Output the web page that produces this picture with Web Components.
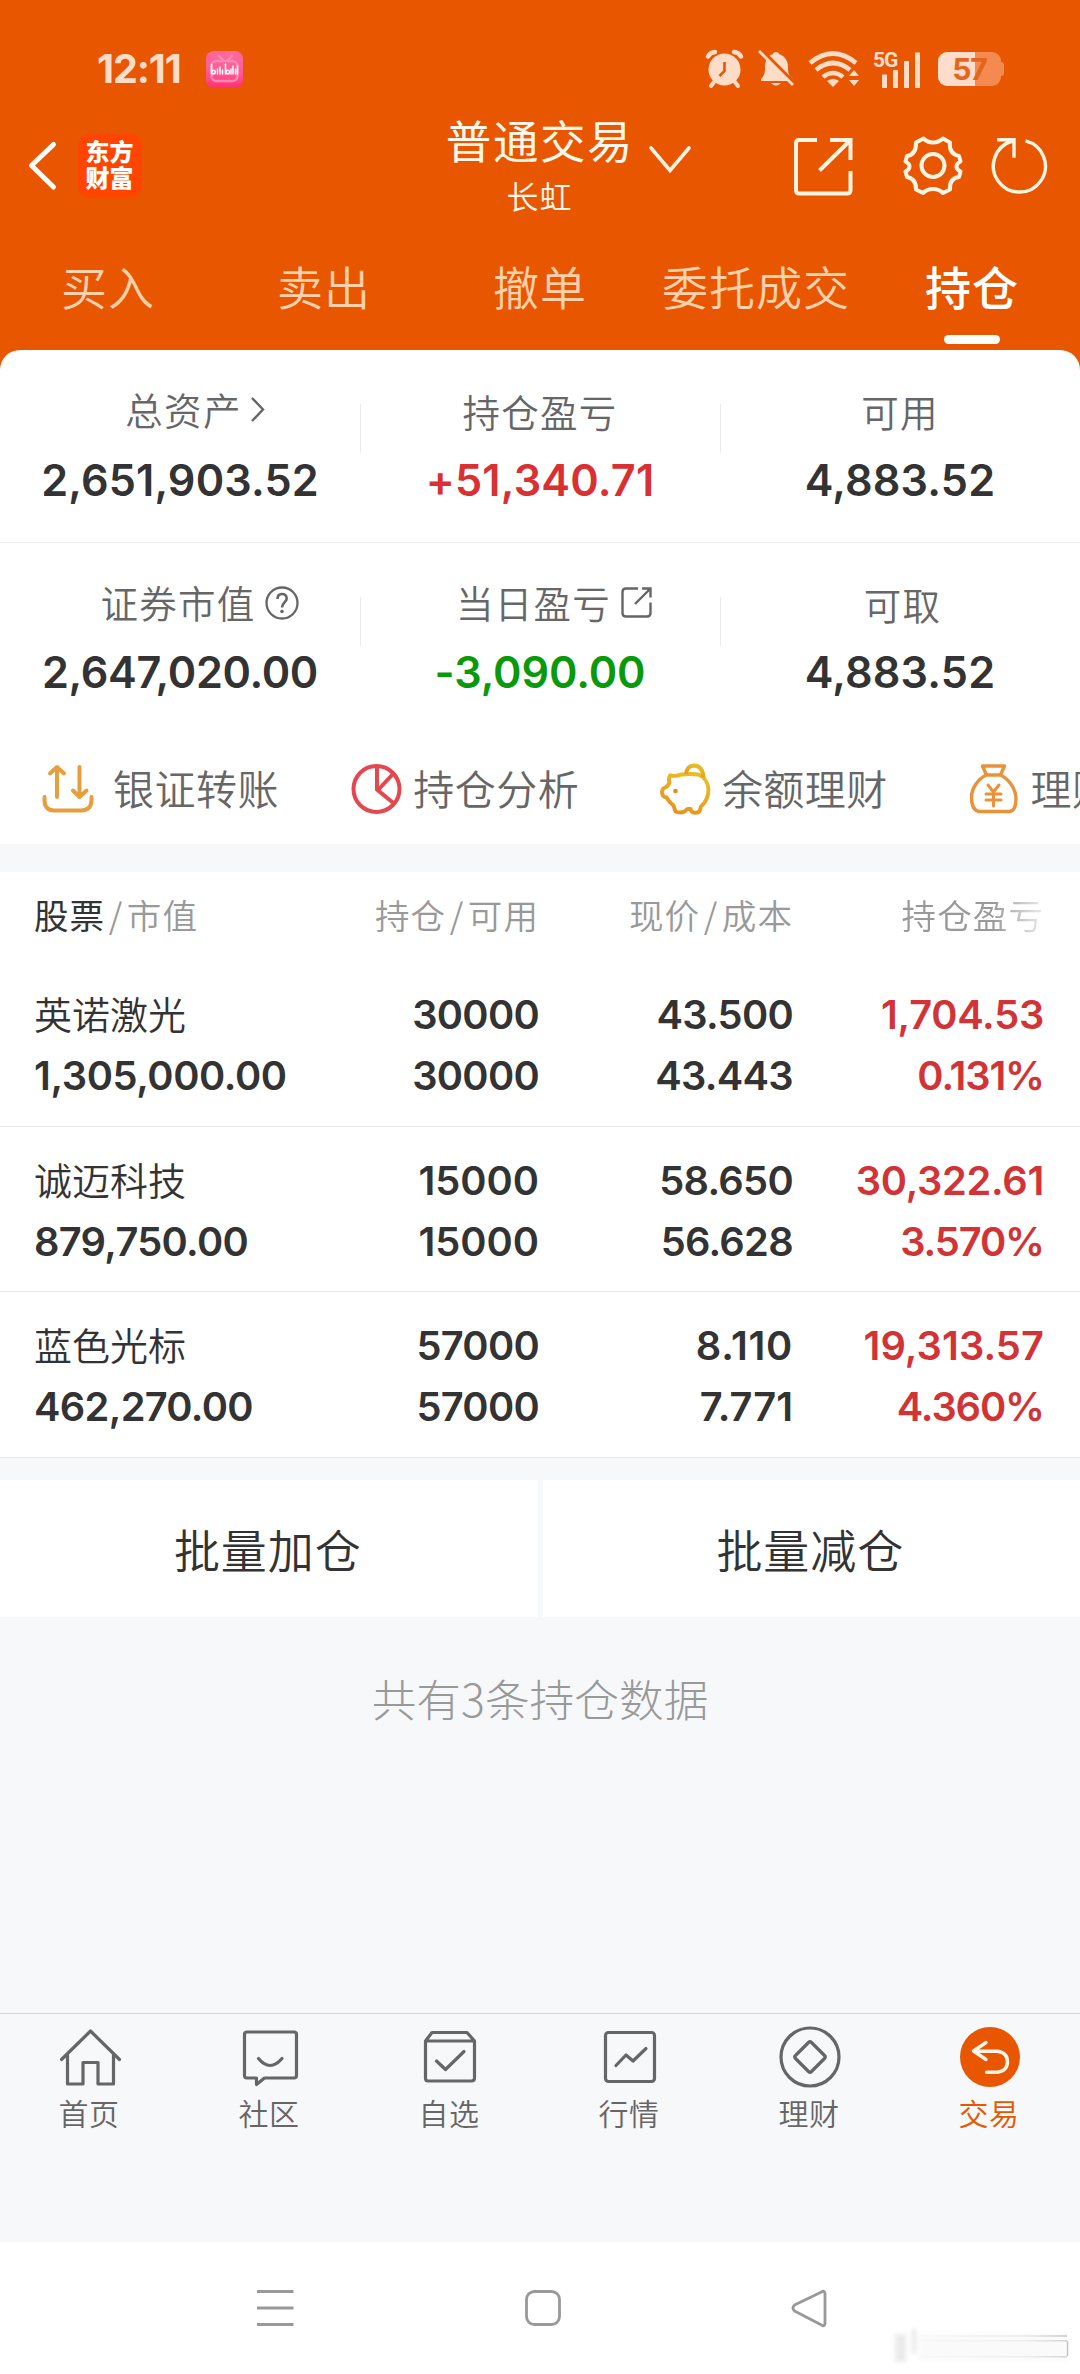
<!DOCTYPE html>
<html lang="zh-CN">
<head>
<meta charset="utf-8">
<title>普通交易 - 持仓</title>
<style>
html,body{margin:0;padding:0}
body{width:1080px;background:#f7f8fa;font-family:"Noto Sans CJK SC",sans-serif;font-weight:350;color:#333;
--num:Inter,"Noto Sans CJK SC",sans-serif;--brand:#e95600;--gray:#666;--line:#ebedef}
</style>
</head>
<body>
<trade-app></trade-app>
<script>
const define=(name,css,html)=>customElements.define(name,class extends HTMLElement{
  connectedCallback(){
    if(this.shadowRoot)return;
    const root=this.attachShadow({mode:'open'});
    const body=typeof html==='function'?html(this):html;
    root.innerHTML=`<style>*{box-sizing:border-box}svg{display:block;flex:none;overflow:visible}${css}</style>${body}`;
  }
});
const svg=(x,y,w,h,inner,attrs='')=>`<svg width="${w}" height="${h}" viewBox="${x} ${y} ${w} ${h}" fill="none" ${attrs}>${inner}</svg>`;

define('status-bar',`
:host{display:flex;align-items:center;height:110px;padding:28px 0 0 97px;color:#ffdcc8;font-family:var(--num)}
.time{width:109px;font-size:39.5px;font-weight:700;line-height:44px;letter-spacing:-1.1px}
.bili{width:37px;height:37px;border-radius:8px;background:linear-gradient(#ff6a9d,#ff5a94 60%,#ff2f74);margin-right:463px}
.net{display:flex;margin-left:13px;width:50px;height:37px}
.batt{display:flex;align-items:center;margin-left:15px}
.cell{display:flex;align-items:center;justify-content:center;width:63px;height:34px;border-radius:9px;background:linear-gradient(90deg,#ffdccb 0 37px,#f58a50 37px);color:#e4661d;font:700 30px/34px Inter,sans-serif;letter-spacing:-1px}
.nub{width:3px;height:14px;border-radius:0 3px 3px 0;background:#f58a50}
.g{font:700 21px/18px Roboto,sans-serif;letter-spacing:-1px;width:23px;white-space:nowrap}
`,`
<div class="time">12:11</div>
<div class="bili">${svg(206,52,37,37,`<g stroke="#ff8bb5" stroke-width="2.400" stroke-linecap="round"><rect x="211.500" y="62" width="26" height="20" rx="5"/><path d="M219 57l4 4m9-4-4 4"/></g><g stroke="#fff" stroke-width="1.500" stroke-linecap="round"><path d="M211.500 65.500v9M217.500 70v5M220 68v7M222.500 71v4M225.500 65v10M231 70v5M233 67v8M235.500 70v5M237.500 67v8"/><circle cx="213.500" cy="73" r="1.800"/><circle cx="227.700" cy="73" r="1.800"/></g>`)}</div>
${svg(706,50,37,38,`<circle cx="724.500" cy="69.500" r="16" fill="#ffdcc8"/><path d="M708 56.500q2-4 7-4.500M741 56.500q-2-4-7-4.500" stroke="#ffdcc8" stroke-width="4.500" stroke-linecap="round"/><path d="M714 82l-3 4m24-4 3 4" stroke="#ffdcc8" stroke-width="4" stroke-linecap="round"/><path d="M724.500 62v9l-5 5" stroke="#e95600" stroke-width="2.600"/>`)}
${svg(758,50,37,38,`<path d="M776 52c2 0 3 1 3 2 6 2 9 7 9 13 0 7 1 9 5 12v2H761v-2c3-3 4-5 4-11 0-7 2-12 8-14 0-1 1-2 3-2z" fill="#ffdcc8"/><path d="M771 83h10q-5 5-10 0z" fill="#ffdcc8"/><path d="M761 50l36 36" stroke="#e95600" stroke-width="4"/><path d="M759 51l34 34" stroke="#ffdcc8" stroke-width="2.800"/>`,'style="margin-left:15px"')}
${svg(808,50,52,38,`<g stroke="#ffdcc8" stroke-width="4.600"><path d="M810 63q23-19 46 0M816 70q17-14 34 0M823 77q10-8 20 0"/></g><path d="M827 81q6-4 12 0l-6 6z" fill="#ffdcc8"/><path d="M849 76l5-6 5 6zM849 80h10l-5 6z" fill="#ffdcc8"/>`,'style="margin-left:13px"')}
<div class="net"><span class="g">5G</span>${svg(896,50,26,38,`<path d="M895.500 69v18M906.500 60v27M917.500 51.500v35.500M884.500 73.500v13.500" stroke="#ffdcc8" stroke-width="5"/>`)}</div>
<div class="batt"><div class="cell">57</div><div class="nub"></div></div>
`);

define('nav-header',`
:host{display:grid;grid-template-columns:78px 368px 191px 1fr;height:112px;color:#fff8ea}
.back{padding:30px 0 0 27px}
.logo{display:flex;align-items:center;justify-content:center;width:64px;height:64px;margin-top:24px;border-radius:12px;background:#ff4500;color:#fff;font-weight:800;font-size:24px;line-height:26.500px;padding-bottom:4px}
.logo span{width:49px;word-break:break-all}
.mid{display:flex;flex-direction:column;align-items:center;padding:2px 3px 0 0}
.t{font-size:45.5px;line-height:54px;letter-spacing:1.6px;white-space:nowrap;font-weight:400}
.s{font-size:32px;line-height:44px;margin-top:7px;letter-spacing:1px;margin-right:1px}
.acts{display:flex;align-items:flex-start}
`,`
<div class="back">${svg(27,140,30,51,`<path d="M53.500 144.500 31.500 165.500 53.500 187" stroke="#fff" stroke-width="5" stroke-linecap="round" stroke-linejoin="round"/>`)}</div>
<div><div class="logo"><span>东方财富</span></div></div>
<div class="mid"><div class="t">普通交易</div><div class="s">长虹</div></div>
<div class="acts">${svg(637,110,430,112,`<g stroke="#fff4e2" stroke-linecap="round">
<path d="M651 148l19 22.500 19-22.500" stroke-width="3.600"/>
<g stroke-width="4" stroke-linecap="butt"><path d="M817 140H799q-3 0-3 3.500V190q0 3.500 3 3.500H847q3.500 0 3.500-3.500V171"/><path d="M830 140h20.500v20M850 140.500 819.500 170.500"/></g>
<circle cx="933" cy="165.500" r="11.500" stroke-width="4"/>
<path stroke-width="4" stroke-linejoin="round" d="M923.500 138.500q4 4 9.500 4t10-4l7 4q-1.500 11 9 13.500l1.500 5.500q-4 2-4 5t4 5l-1.500 5.500q-10 1.500-9 12.500l-7 3.500q-4-4-10-4t-10 4l-7-3.500q.500-10.500-9-12.500l-1.500-5.500q4-2 4-5t-4-5l1.500-5.500q9.500-1.500 9-13.500z"/>
<path d="M1025.500 140.800A26 26 0 1 1 1012.500 141M997 139.800h17v18" stroke-width="3.400" stroke-linecap="butt"/>
</g>`)}</div>
`);

define('trade-tabs',`
:host{display:flex;height:128px}
div{flex:1;display:flex;flex-direction:column;align-items:center;color:#ffd0ac;font-size:46px;line-height:64px;letter-spacing:1px;padding-top:31px;white-space:nowrap}
.on{color:#fff;font-weight:500}
.on::after{content:"";width:56px;height:9px;border-radius:4.500px;background:#fff;margin-top:18px}
`,`<div>买入</div><div>卖出</div><div>撤单</div><div>委托成交</div><div class="on">持仓</div>`);

define('sum-cell',`
:host{display:block;height:192px;padding-top:36px;text-align:center;position:relative}
:host([divided])::after{content:"";position:absolute;right:-1px;top:54px;width:1px;height:49px;background:#ebebeb}
.l{display:flex;justify-content:center;align-items:center;height:50px;font-size:37.5px;letter-spacing:1.3px;color:var(--gray);line-height:50px}
:host([icon]) .l{padding-bottom:5px;gap:9px}
:host([icon=more]) .l{padding-left:30px}
:host([icon=help]) .l{padding-left:39px}
:host([icon=open]) .l{padding-left:29px}
:host([low]) .l{padding-left:5px}
.v{font:600 43.200px/54px var(--num);margin-top:17px;letter-spacing:var(--track,0)}
:host([second]) .v{margin-top:15.500px}
:host([tone=up]) .v{color:#d93033}
:host([tone=down]) .v{color:#0a990a}
`,el=>{
const icons={
more:svg(251,398,14,26,`<path d="M252 400l11 11.500-11 11.500" stroke="#666" stroke-width="2.400"/>`),
help:svg(265,586,34,36,`<circle cx="282" cy="605" r="15.500" stroke="#666" stroke-width="2.300"/><path d="M277.500 601q0-5 4.500-5t4.700 4.500c0 3.500-4.700 4-4.700 9" stroke="#666" stroke-width="2.600"/><circle cx="282" cy="613.500" r="1.800" fill="#666"/>`),
open:svg(621,588,32,31,`<path d="M638 590.500H626q-3.500 0-3.500 3.500v21q0 3.500 3.500 3.500h21q3.500 0 3.500-3.500v-10.500M642 590.500h8.500v9M650 591l-15 15" stroke="#666" stroke-width="2.400"/>`,'style="margin-left:1px"')};
return `<div class="l"><span>${el.getAttribute('label')}</span>${icons[el.getAttribute('icon')]||''}</div><div class="v"><slot></slot></div>`});

define('asset-summary',`
:host{display:block;background:var(--brand)}
.card{background:#fff;border-radius:20px 20px 0 0}
.row{display:grid;grid-template-columns:repeat(3,360px);height:193px}
.row+.row{height:192px}
.row:first-child{border-bottom:1px solid var(--line)}
`,`<div class="card">
<div class="row"><sum-cell label="总资产" icon="more" divided style="--track:.15px">2,651,903.52</sum-cell><sum-cell label="持仓盈亏" tone="up" divided style="--track:.2px">+51,340.71</sum-cell><sum-cell label="可用" style="--track:.15px">4,883.52</sum-cell></div>
<div class="row"><sum-cell second label="证券市值" icon="help" divided style="--track:-.35px">2,647,020.00</sum-cell><sum-cell second label="当日盈亏" icon="open" tone="down" divided style="--track:-.1px">-3,090.00</sum-cell><sum-cell second label="可取" low style="--track:.15px">4,883.52</sum-cell></div>
</div>`);

define('quick-links',`
:host{display:flex;height:109px;background:#fff;padding-left:42px;overflow:hidden}
div{display:flex;align-items:center;flex:0 0 308.700px;gap:10.500px;font-size:41px;letter-spacing:.5px;color:var(--gray);white-space:nowrap}
div:first-of-type{gap:19px}
span{line-height:60px;padding-bottom:6px}
`,`
<div>${svg(42,764,52,52,`<g stroke="#e79e3c" stroke-width="4" stroke-linecap="round" stroke-linejoin="round"><path d="M57 797v-29.500M50 773.500l7-6.500 7 6.500M79.500 767v29M73 790.500l6.500 6.500 7-6.500"/><path d="M44.500 797v3q0 10 9 10.500h28q10-.5 10-10.500v-3"/></g>`)}<span>银证转账</span></div>
<div>${svg(351,764,52,52,`<g stroke="#e4474d" stroke-width="4"><circle cx="376.500" cy="789" r="23"/><path d="M377 766v23.500l17 14M378 790l15-16"/></g>`)}<span>持仓分析</span></div>
<div>${svg(659,764,52,52,`<defs><linearGradient id="p" x1="0" y1="1" x2=".5" y2="0"><stop stop-color="#e88a22"/><stop offset="1" stop-color="#e8bd24"/></linearGradient></defs><g stroke="url(#p)" stroke-width="3.900" stroke-linejoin="round"><path d="M670 775.500q7 1 11-1 12-1 17 0c6 2 10 8 10.500 15 0 6-3 13-7.500 17l-1.500 5q-4 2.500-8 0l-1-2.500h-3l-3 2.500q-4 2-9 0l-2-6q-4-3-7-8-4.500-1-4.500-5 0-4 3-5 3-1 4.500-5-1.500-3 .5-7z"/><path d="M686.500 774q-.5-8 7.500-8.500 9 .5 9.500 12"/></g><circle cx="675.500" cy="791" r="2.300" fill="#e88a22"/>`)}<span>余额理财</span></div>
<div>${svg(968,764,52,52,`<g stroke="#e99239" stroke-width="3.400" stroke-linejoin="round" stroke-linecap="round"><path d="M982.500 766h22l-4 9h-14zM986.500 775c-9 4-15 14-15 22 0 9 3 14 8 14.500h30c5-.5 6.500-6 6.500-13 0-8-6-19-15.500-23.500"/><path d="M988 785l5.500 7 5.500-7M993.500 792v14M986 794h15M986 800h15" stroke-width="3"/></g>`)}<span>理财</span></div>
`);

define('table-head',`
:host{display:grid;grid-template-columns:220px 285px 254px 251px;height:89px;padding:0 36px 0 34px;margin-top:28px;background:#fff;color:#999;font-size:34.500px;line-height:84px;letter-spacing:1.1px}
div{text-align:right;white-space:nowrap}
div:first-of-type{text-align:left}
b{font-weight:400;color:#333}
i{display:inline-block;font-style:normal;margin:0 3.500px 0 3.500px}
.fade{-webkit-mask-image:linear-gradient(90deg,#000 200px,transparent 262px);mask-image:linear-gradient(90deg,#000 200px,transparent 262px)}
`,`<div><b>股票</b><i>/</i>市值</div><div>持仓<i>/</i>可用</div><div>现价<i>/</i>成本</div><div class="fade">持仓盈亏</div>`);

/* Tracking follows the share of narrow "1" digits so that figures keep an even width. */
const fig=t=>`<span style="letter-spacing:${t.endsWith('%')?-1.1:(-.7+3.5*(t.split('1').length-1)/t.length).toFixed(2)}px">${t}</span>`;
define('holding-row',`
:host{display:grid;grid-template-columns:220px 285px 254px 251px;height:165.500px;padding:23px 36px 0 34px;background:#fff;border-bottom:1px solid #e6eaeb;font:600 39.800px/61px var(--num)}
div{display:grid;grid-template-rows:61px 60px;text-align:right}
div:first-of-type{text-align:left}
.n{font:350 38px/57px "Noto Sans CJK SC",sans-serif}
.up{color:#d13337}
span{white-space:nowrap}
`,el=>{const d=el.getAttribute('data').split('|');
return `<div><span class="n">${d[0]}</span>${fig(d[1])}</div><div>${fig(d[2])}${fig(d[3])}</div><div>${fig(d[4])}${fig(d[5])}</div><div class="up">${fig(d[6])}${fig(d[7])}</div>`});

define('batch-actions',`
:host{display:grid;grid-template-columns:537.500px 537.500px;gap:5px;height:137px;margin-top:22px}
button{all:unset;background:#fff;text-align:center;font-size:46px;line-height:131px;letter-spacing:.9px;text-indent:-2px}
`,`<button>批量加仓</button><button>批量减仓</button>`);

define('list-note',`
:host{display:block;height:396px;padding-top:48px;text-align:center;color:#999;font-size:44.700px;line-height:66px;font-weight:250}
`,`<slot></slot>`);

define('tab-item',`
:host{display:flex;flex-direction:column;align-items:center;flex:1;color:var(--gray);font-size:30px;letter-spacing:.6px;line-height:40px;padding-top:12px}
:host([active]){color:var(--brand)}
span{margin-top:4.500px;margin-right:2px}
`,el=>{
const s='stroke="#666" stroke-width="3.200" stroke-linejoin="round" stroke-linecap="round"';
const I={
home:[60,`<path ${s} d="M61.500 2059.500 90.500 2031l29 28.500M67.500 2055v29h15.500v-21.500h15v21.500h15.500v-29"/>`],
chat:[240,`<path ${s} d="M247 2032h47q2.500 0 2.500 2.500v41q0 2.500-2.500 2.500h-29.500l-8 6.500v-6.500h-9.500q-2.500 0-2.500-2.500v-41q0-2.500 2.500-2.500z"/><path ${s} d="M258.500 2058.500q11.500 14 23.500 0"/>`],
box:[420,`<path ${s} d="M425.500 2041 432 2032.500h35l7.500 8.500v37q0 3-3 3h-43.500q-2.500 0-2.500-3zM426 2041h48"/><path ${s} d="M436.500 2061l9 8.500 18.500-18"/>`],
chart:[600,`<rect ${s} x="605.500" y="2032.500" width="49" height="49" rx="3"/><path ${s} d="M616 2065.500l10-10.500 7 6 13-12.500"/>`],
gem:[780,`<circle ${s} cx="810" cy="2057" r="29"/><path ${s} d="M808.500 2042.500q1.500-1.500 3 0l13 13q1.500 1.500 0 3l-13 13q-1.500 1.500-3 0l-13-13q-1.500-1.500 0-3z"/>`],
trade:[960,`<circle cx="990" cy="2057" r="30" fill="#e95600"/><path d="M986 2042.500 973.500 2051l12.500 8.500M974 2051.200h23.500q10 1.500 10 10.500t-10 10.500h-11" stroke="#fff4e6" stroke-width="3.400" stroke-linecap="round" stroke-linejoin="round"/>`]};
const [x,p]=I[el.getAttribute('icon')];
return svg(x,2026,60,62,p)+`<span><slot></slot></span>`});

define('tab-bar',`
:host{display:flex;height:229px;border-top:1.500px solid #cfd3d6;background:#f7f8fa}
`,`<tab-item icon="home">首页</tab-item><tab-item icon="chat">社区</tab-item><tab-item icon="box">自选</tab-item><tab-item icon="chart">行情</tab-item><tab-item icon="gem">理财</tab-item><tab-item icon="trade" active>交易</tab-item>`);

define('system-nav',`
:host{display:block;height:132px;background:#fff}
`,svg(0,2242,1080,132,`<defs>
<linearGradient id="f"><stop stop-color="#aaa" stop-opacity=".03"/><stop offset=".7" stop-color="#aaa" stop-opacity=".15"/><stop offset="1" stop-color="#999" stop-opacity=".4"/></linearGradient><filter id="b" x="-50%" y="-50%" width="200%" height="200%"><feGaussianBlur stdDeviation="2"/></filter></defs>
<g stroke="#999" stroke-width="2.800"><path d="M257 2291.500h36.500M257 2308h36.500M257 2324.500h36.500"/><rect x="526.500" y="2291.500" width="33" height="33" rx="8"/><path stroke-linejoin="round" d="M821.500 2292q3-2 3.500 1.500v30q-.5 3.500-3.500 1.500l-27-14q-3-3 0-6z"/></g>
<g filter="url(#b)"><rect x="895" y="2334" width="11" height="28" fill="#ebebeb"/><rect x="912" y="2329" width="4" height="24" fill="#e8e8e8"/><rect x="918" y="2334" width="150" height="27" fill="#fafafa"/></g>
<path fill="url(#f)" d="M920 2335h147v2H920zM920 2340h147v1.500H920zM920 2356h147v1.500H920z"/><path d="M1067.500 2341v15" stroke="#c4c4c4" stroke-width="1.500"/>`));

define('trade-app',`
:host{display:block;width:1080px;height:2374px;overflow:hidden}
header{background:var(--brand)}
`,`
<header><status-bar></status-bar><nav-header></nav-header><trade-tabs></trade-tabs></header>
<asset-summary></asset-summary>
<quick-links></quick-links>
<table-head></table-head>
<holding-row data="英诺激光|1,305,000.00|30000|30000|43.500|43.443|1,704.53|0.131%"></holding-row>
<holding-row data="诚迈科技|879,750.00|15000|15000|58.650|56.628|30,322.61|3.570%"></holding-row>
<holding-row data="蓝色光标|462,270.00|57000|57000|8.110|7.771|19,313.57|4.360%"></holding-row>
<batch-actions></batch-actions>
<list-note>共有3条持仓数据</list-note>
<tab-bar></tab-bar>
<system-nav></system-nav>
`);
</script>
</body>
</html>
